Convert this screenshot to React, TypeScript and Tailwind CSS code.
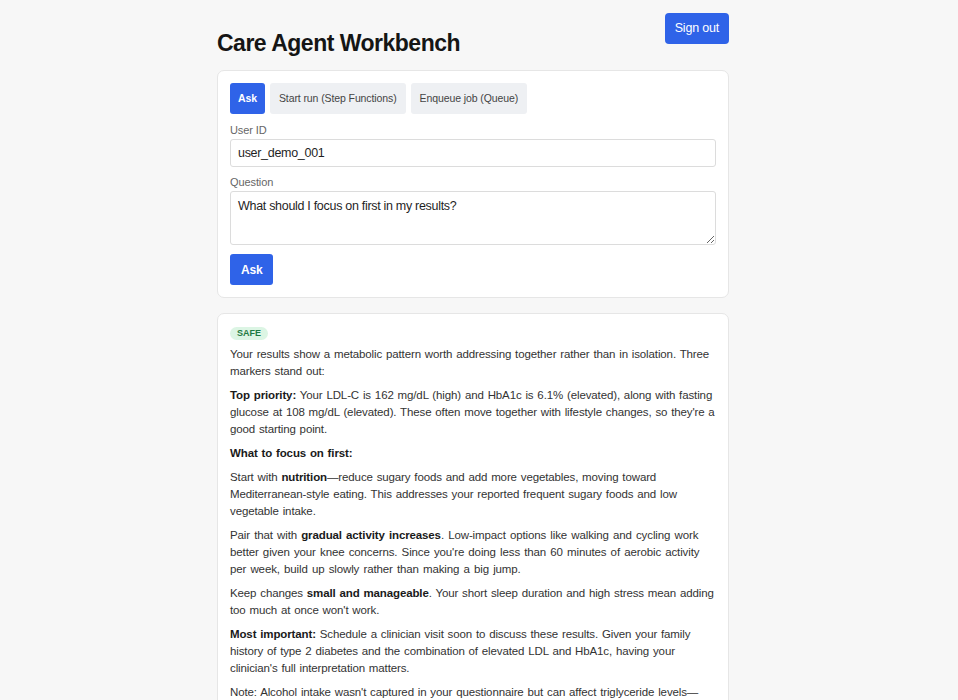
import React, { useState } from 'react';

type Mode = 'ask' | 'run' | 'queue';

const tabs: { id: Mode; label: string }[] = [
  { id: 'ask', label: 'Ask' },
  { id: 'run', label: 'Start run (Step Functions)' },
  { id: 'queue', label: 'Enqueue job (Queue)' },
];

const App = (): React.ReactElement => {
  const [mode, setMode] = useState<Mode>('ask');
  const [userId, setUserId] = useState('user_demo_001');
  const [question, setQuestion] = useState(
    'What should I focus on first in my results?'
  );

  return (
    <div className="min-h-screen bg-[#f7f7f7] pr-[12px] font-['Liberation_Sans','Helvetica',sans-serif] text-[#1f1f1f]">
      <div className="max-w-[512px] mx-auto pt-[13px] pb-8">
        {/* Header */}
        <div className="flex items-start justify-between">
          <h1 className="mt-[16px] text-[23px] leading-[28px] font-bold tracking-[-0.5px] text-[#151515]">
            Care Agent Workbench
          </h1>
          <button className="h-[31px] px-[10px] rounded-[4px] bg-[#2f63e8] text-white text-[12.5px] tracking-[-0.2px]">
            Sign out
          </button>
        </div>

        {/* Request form */}
        <div className="mt-[13px] bg-white border border-[#e6e6e6] rounded-[7px] p-[12px]">
          <div className="flex gap-[5px]">
            {tabs.map((t) => (
              <button
                key={t.id}
                onClick={() => setMode(t.id)}
                className={
                  mode === t.id
                    ? 'h-[31px] px-[8px] rounded-[3px] bg-[#2f63e8] text-white text-[10.5px] tracking-[-0.1px] font-bold'
                    : 'h-[31px] px-[9px] rounded-[3px] bg-[#eef0f3] text-[#444] text-[10.5px] tracking-[-0.1px]'
                }
              >
                {t.label}
              </button>
            ))}
          </div>

          <label className="block mt-[9px] text-[11px] leading-[14px] tracking-[-0.1px] text-[#666]">
            User ID
          </label>
          <input
            value={userId}
            onChange={(e) => setUserId(e.target.value)}
            className="mt-[2px] w-full h-[28px] px-[7px] border border-[#dcdcdc] rounded-[3px] text-[12.5px] tracking-[-0.3px] text-[#1f1f1f] outline-none"
          />

          <label className="block mt-[8px] text-[11px] leading-[14px] tracking-[-0.1px] text-[#666]">
            Question
          </label>
          <textarea
            value={question}
            onChange={(e) => setQuestion(e.target.value)}
            className="block mt-[2px] w-full h-[54px] px-[7px] py-[6px] border border-[#dcdcdc] rounded-[3px] text-[12.5px] leading-[16px] tracking-[-0.3px] text-[#1f1f1f] outline-none"
          />

          <button className="mt-[9px] h-[31px] px-[11px] rounded-[3px] bg-[#2f63e8] text-white text-[12px] tracking-[-0.2px] font-bold">
            Ask
          </button>
        </div>

        {/* Answer */}
        <div className="mt-[15px] bg-white border border-[#e6e6e6] rounded-[7px] px-[12px] pt-[10px] pb-[12px] text-[11.5px] leading-[17px] tracking-[-0.12px] [word-spacing:0.8px] text-[#333]">
          <span className="inline-block px-[7px] h-[13px] leading-[13px] rounded-full bg-[#dcf5e4] text-[#1e7a43] text-[9px] font-bold tracking-normal">
            SAFE
          </span>
          <div className="mt-[5px] space-y-[7px]">
            <p>
              Your results show a metabolic pattern worth addressing together
              rather than in isolation. Three markers stand out:
            </p>
            <p>
              <strong className="text-[#1a1a1a]">Top priority:</strong> Your
              LDL-C is 162 mg/dL (high) and HbA1c is 6.1% (elevated), along
              with fasting glucose at 108 mg/dL (elevated). These often move
              together with lifestyle changes, so they're a good starting
              point.
            </p>
            <p>
              <strong className="text-[#1a1a1a]">What to focus on first:</strong>
            </p>
            <p>
              Start with <strong className="text-[#1a1a1a]">nutrition</strong>
              —reduce sugary foods and add more vegetables, moving toward
              Mediterranean-style eating. This addresses your reported frequent
              sugary foods and low vegetable intake.
            </p>
            <p className="[word-spacing:1.1px]">
              Pair that with{' '}
              <strong className="text-[#1a1a1a]">gradual activity increases</strong>.
              Low-impact options like walking and cycling work better given
              your knee concerns. Since you're doing less than 60 minutes of
              aerobic activity per week, build up slowly rather than making a
              big jump.
            </p>
            <p>
              Keep changes{' '}
              <strong className="text-[#1a1a1a]">small and manageable</strong>.
              Your short sleep duration and high stress mean adding too much at
              once won't work.
            </p>
            <p>
              <strong className="text-[#1a1a1a]">Most important:</strong>{' '}
              Schedule a clinician visit soon to discuss these results. Given
              your family history of type 2 diabetes and the combination of
              elevated LDL and HbA1c, having your clinician's full
              interpretation matters.
            </p>
            <p>
              Note: Alcohol intake wasn't captured in your questionnaire but
              can affect triglyceride levels—worth mentioning to your clinician
              if relevant.
            </p>
          </div>
        </div>
      </div>
    </div>
  );
};

export default App;
